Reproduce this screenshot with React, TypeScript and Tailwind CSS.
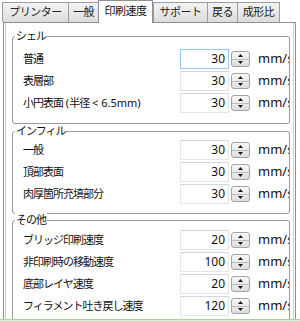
import type { ReactNode } from "react";

type Row = { label: ReactNode; value: string; focused?: boolean };

const jp = "tracking-[-1px]";

const shell: Row[] = [
  { label: <span className={jp}>普通</span>, value: "30", focused: true },
  { label: <span className={jp}>表層部</span>, value: "30" },
  {
    label: (
      <>
        <span className={jp}>小円表面</span> (<span className={jp}>半径</span> &lt; 6.5mm)
      </>
    ),
    value: "30",
  },
];

const infill: Row[] = [
  { label: <span className={jp}>一般</span>, value: "30" },
  { label: <span className={jp}>頂部表面</span>, value: "30" },
  { label: <span className={jp}>肉厚箇所充填部分</span>, value: "30" },
];

const other: Row[] = [
  { label: <span className={jp}>ブリッジ印刷速度</span>, value: "20" },
  { label: <span className={jp}>非印刷時の移動速度</span>, value: "100" },
  { label: <span className={jp}>底部レイヤ速度</span>, value: "20" },
  { label: <span className={jp}>フィラメント吐き戻し速度</span>, value: "120" },
];

function Spinner() {
  return (
    <div className="ml-[2px] flex h-[16px] w-[19px] shrink-0 flex-col overflow-hidden rounded-[3px] border border-[#a3a3a3] bg-linear-to-b from-[#f8f8f8] to-[#dedede]">
      <div className="flex flex-1 items-center justify-center border-b border-[#bcbcbc]">
        <svg width="5" height="3" viewBox="0 0 5 3">
          <path d="M2.5 0L5 3H0z" fill="#1a1a1a" />
        </svg>
      </div>
      <div className="flex flex-1 items-center justify-center">
        <svg width="5" height="3" viewBox="0 0 5 3">
          <path d="M0 0H5L2.5 3z" fill="#1a1a1a" />
        </svg>
      </div>
    </div>
  );
}

function SpeedRow({ row }: { row: Row }) {
  return (
    <div className="flex h-[20px] items-center">
      <div className="w-[157px] shrink-0 overflow-hidden whitespace-nowrap text-[11px] text-[#111]">
        {row.label}
      </div>
      <div
        className={`flex h-[20px] w-[49px] shrink-0 items-center justify-end border pr-[3px] text-[12px] text-[#111] ${
          row.focused ? "border-[#9cc6ef]" : "border-[#e1e5ea] border-t-[#d3d7dc]"
        }`}
      >
        {row.value}
      </div>
      <Spinner />
      {/* unit is cut off by the group border in the original dialog */}
      <div className="ml-[8px] w-[31px] shrink-0 overflow-hidden whitespace-nowrap text-[13px] text-[#111]">
        mm/s
      </div>
    </div>
  );
}

function Group({ title, rows, className }: { title: string; rows: Row[]; className: string }) {
  return (
    <div className={`relative w-[278px] rounded-[3px] border border-[#9a9a9a] pl-[10px] ${className}`}>
      <span className="absolute -top-[8px] left-[2px] bg-white px-[1px] text-[11px] leading-[14px] tracking-[-1px] text-[#111]">
        {title}
      </span>
      <div className="flex flex-col gap-[2px]">
        {rows.map((r, i) => (
          <SpeedRow key={i} row={r} />
        ))}
      </div>
    </div>
  );
}

const tabs = [
  { label: "プリンター", w: "w-[67px] ml-[2px]" },
  { label: "一般", w: "w-[31px] -ml-px" },
  { label: "印刷速度", w: "w-[55px] -ml-px", active: true },
  { label: "サポート", w: "w-[55px]" },
  { label: "戻る", w: "w-[31px] -ml-px" },
  { label: "成形比", w: "w-[43px] -ml-px" },
];

export default function App() {
  return (
    <div className="flex h-[321px] w-[300px] flex-col overflow-hidden bg-white font-['Noto_Sans','Noto_Sans_CJK_JP',sans-serif]">
      <div className="flex h-[22px] shrink-0 items-end">
        {tabs.map((t) =>
          t.active ? (
            <div
              key={t.label}
              className={`relative z-10 -mb-px flex h-[23px] items-center justify-center border border-b-0 border-[#8e9097] bg-white pb-[1px] text-[11px] tracking-[-0.5px] text-[#111] ${t.w}`}
            >
              {t.label}
            </div>
          ) : (
            <div
              key={t.label}
              className={`flex h-[20px] items-center justify-center border border-b-0 border-[#9a9ca2] bg-linear-to-b from-[#f4f4f4] to-[#dcdcdc] text-[11px] tracking-[-0.5px] text-[#222] ${t.w}`}
            >
              {t.label}
            </div>
          )
        )}
      </div>
      <div className="ml-[3px] min-h-0 w-[293px] flex-1 overflow-hidden border border-b-0 border-[#8e9097] pl-[8px] pt-[13px] shadow-[inset_1px_0_0_#fff,inset_2px_0_0_#d0d0d0,inset_-1px_0_0_#fff,inset_-2px_0_0_#d0d0d0]">
        <Group title="シェル" rows={shell} className="pt-[12px] pb-[10px]" />
        <Group title="インフィル" rows={infill} className="mt-[7px] pt-[8px] pb-[9px]" />
        <Group title="その他" rows={other} className="mt-[6px] pt-[9px] pb-[9px]" />
      </div>
      <div className="h-[2px] shrink-0 border-t border-[#a8d49c] bg-[#dcefd5]" />
    </div>
  );
}
